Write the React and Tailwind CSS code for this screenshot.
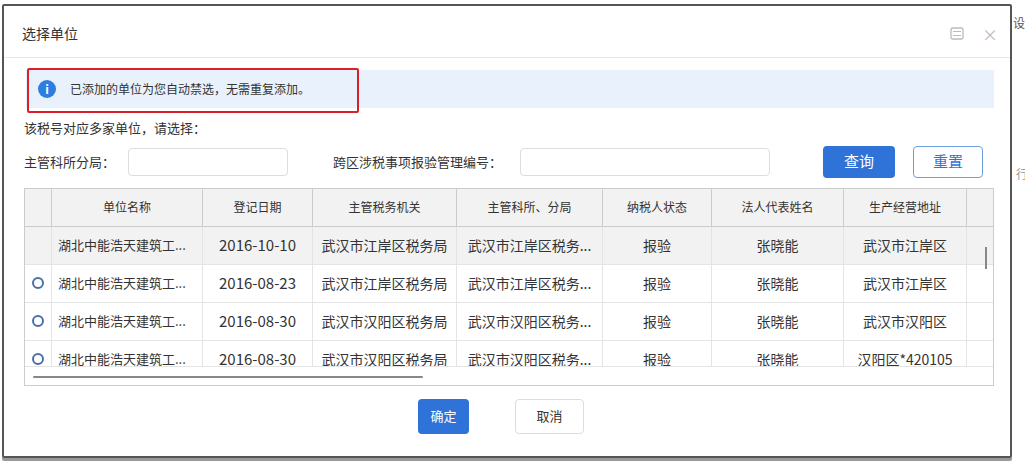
export default function App() {
  const cols = [
    { w: 27, t: "" },
    { w: 151, t: "单位名称" },
    { w: 110, t: "登记日期" },
    { w: 144, t: "主管税务机关" },
    { w: 146, t: "主管科所、分局" },
    { w: 109, t: "纳税人状态" },
    { w: 132, t: "法人代表姓名" },
    { w: 123, t: "生产经营地址" },
    { w: 27, t: "" },
  ];
  const rows = [
    ["湖北中能浩天建筑工...", "2016-10-10", "武汉市江岸区税务局", "武汉市江岸区税务...", "报验", "张晓能", "武汉市江岸区"],
    ["湖北中能浩天建筑工...", "2016-08-23", "武汉市江岸区税务局", "武汉市江岸区税务...", "报验", "张晓能", "武汉市江岸区"],
    ["湖北中能浩天建筑工...", "2016-08-30", "武汉市汉阳区税务局", "武汉市汉阳区税务...", "报验", "张晓能", "武汉市汉阳区"],
    ["湖北中能浩天建筑工...", "2016-08-30", "武汉市汉阳区税务局", "武汉市汉阳区税务...", "报验", "张晓能", "汉阳区*420105"],
  ];
  return (
    <div className="w-[1025px] h-[464px] bg-white relative overflow-hidden text-[#333]" style={{ fontFamily: '"Noto Sans CJK SC","Noto Sans",sans-serif' }}>
      <div className="absolute left-[1013px] top-[14px] w-[12px] overflow-hidden text-[12px] text-[#555]">设</div>
      <div className="absolute left-[1016px] top-[165px] w-[9px] overflow-hidden text-[12px] text-[#999]">行</div>
      <div className="ml-[2px] mt-[4px] w-[1010px] h-[454px] border-2 border-[#555] rounded-[2px] flex flex-col shadow-[0_3px_0_#999]">
        <div className="h-[52px] border-b border-[#e8e8e8] flex items-center justify-between pl-[18px] pr-[12px] pt-[4px]">
          <span className="text-[14px] text-[#333]">选择单位</span>
          <div className="flex items-center gap-[18px] text-[#bbb]">
            <svg width="14" height="13" viewBox="0 0 14 13"><rect x="1" y="1" width="12" height="11" rx="1.5" fill="none" stroke="#bbb" strokeWidth="1.3" /><line x1="3" y1="4.5" x2="11" y2="4.5" stroke="#bbb" /><line x1="3" y1="8.5" x2="11" y2="8.5" stroke="#bbb" /></svg>
            <span className="text-[16px] leading-none">×</span>
          </div>
        </div>
        <div className="px-[20px] pt-[12px] flex flex-col">
          <div className="h-[38px] bg-[#e9f2fc] relative flex items-center pl-[12px] ml-[2px] mr-[-4px]">
            <div className="absolute left-[1px] top-[-2px] w-[332px] h-[45px] border-2 border-[#d9202a] rounded-[2px]"></div>
            <span className="w-[18px] h-[18px] rounded-full bg-[#2e7de1] text-white text-[12px] font-bold flex items-center justify-center">i</span>
            <span className="ml-[14px] text-[12px] text-[#333]">已添加的单位为您自动禁选，无需重复添加。</span>
          </div>
          <div className="mt-[10px] text-[13px]">该税号对应多家单位，请选择：</div>
          <div className="mt-[9px] flex items-center text-[13px] h-[30px]">
            <span>主管科所分局：</span>
            <div className="ml-[13px] w-[160px] h-[28px] border border-[#ddd] rounded-[4px]"></div>
            <span className="ml-[45px]">跨区涉税事项报验管理编号：</span>
            <div className="ml-[18px] w-[250px] h-[28px] border border-[#ddd] rounded-[4px]"></div>
            <button className="ml-[53px] w-[72px] h-[32px] bg-[#2f73d8] text-white rounded-[4px] text-[15px]">查询</button>
            <button className="ml-[18px] w-[70px] h-[32px] border border-[#6e9fe0] text-[#2f73d8] rounded-[4px] text-[15px]">重置</button>
          </div>
          <div className="mt-[11px] w-[970px] h-[198px] border border-[#ccc] relative overflow-hidden">
            <div className="flex h-[38px] bg-[#f2f2f2] border-b border-[#ccc] text-[12px]">
              {cols.map((c, i) => (
                <div key={i} style={{ width: c.w }} className={"shrink-0 flex items-center justify-center " + (i < cols.length - 1 ? "border-r border-[#ccc]" : "")}>{c.t}</div>
              ))}
            </div>
            {rows.map((r, ri) => (
              <div key={ri} className={"flex h-[38px] border-b border-[#e4e4e4] text-[14px] " + (ri === 0 ? "bg-[#f2f2f2]" : "bg-white")}>
                <div style={{ width: 27 }} className="shrink-0 flex items-center justify-center border-r border-[#e4e4e4]">
                  {ri > 0 && <span className="w-[12px] h-[12px] rounded-full border-2 border-[#4a70a8]"></span>}
                </div>
                {r.map((t, i) => (
                  <div key={i} style={{ width: cols[i + 1].w }} className={"shrink-0 flex items-center whitespace-nowrap overflow-hidden border-r border-[#e4e4e4] " + (i === 0 ? "pl-[6px] text-[13px]" : "justify-center") + (i === 1 ? " text-[15px]" : "")}>{t}</div>
                ))}
                <div className="flex-1"></div>
              </div>
            ))}
            <div className="absolute left-0 right-0 top-[177px] bottom-0 bg-white border-t border-[#e4e4e4]">
              <div className="ml-[8px] mt-[9px] w-[390px] h-[2px] bg-[#888] rounded"></div>
            </div>
            <div className="absolute left-[960px] top-[58px] w-[2px] h-[22px] bg-[#888]"></div>
          </div>
        </div>
        <div className="flex justify-center gap-[46px] mt-[13px] ml-[-12px]">
          <button className="w-[51px] h-[35px] bg-[#2f73d8] text-white rounded-[4px] text-[13px]">确定</button>
          <button className="w-[69px] h-[35px] border border-[#ddd] rounded-[4px] text-[13px]">取消</button>
        </div>
      </div>
    </div>
  );
}
